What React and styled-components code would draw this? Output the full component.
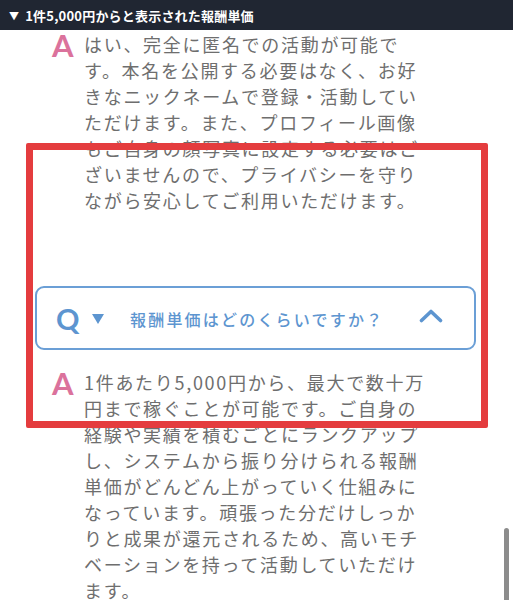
import React from "react";
import styled, { createGlobalStyle } from "styled-components";

const GlobalStyle = createGlobalStyle`
  html, body {
    margin: 0;
    padding: 0;
    background: #ffffff;
  }
  body {
    font-family: "Noto Sans CJK JP", "Noto Sans", sans-serif;
  }
`;

const Page = styled("div")`
  position: relative;
  width: 513px;
  height: 600px;
  overflow: hidden;
  background: #ffffff;
`;

const TopBar = styled("div")`
  height: 30px;
  display: flex;
  align-items: center;
  gap: 6px;
  padding-left: 9px;
  background: #202632;
  color: #ffffff;
  font-size: 13px;
  font-weight: 700;
  letter-spacing: 0.2px;
`;

const Caret = styled("span")`
  font-size: 10px;
`;

const Content = styled("div")`
  padding: 0 37px 0 35px;
`;

const Answer = styled("div")`
  display: flex;
  align-items: flex-start;
  padding-left: 17px;
  margin-top: ${props => props.gap}px;
`;

const Mark = styled("span")`
  flex: 0 0 32px;
  font-family: "Lato", "Noto Sans", sans-serif;
  font-weight: 700;
  font-size: 31px;
  line-height: 26px;
  color: #db729c;
  margin-top: 1px;
`;

const AnswerText = styled("p")`
  margin: 0;
  font-size: 18px;
  line-height: 26px;
  letter-spacing: 1.7px;
  color: #6e6e6e;
  white-space: nowrap;
`;

const QuestionBox = styled("div")`
  height: 60px;
  margin-top: 73px;
  display: flex;
  align-items: center;
  padding: 0 31px 0 19px;
  border: 2px solid #6b9fd6;
  border-radius: 9px;
`;

const QMark = styled("span")`
  font-family: "Lato", "Noto Sans", sans-serif;
  font-weight: 700;
  font-size: 29px;
  color: #5d95d0;
  width: 36px;
  margin-top: 1px;
`;

const QTriangle = styled("svg")`
  width: 12px;
  height: 10px;
  margin-right: 26px;
  margin-top: 1px;
`;

const QuestionText = styled("span")`
  flex: 1;
  font-size: 16px;
  font-weight: 500;
  letter-spacing: 2.2px;
  color: #5d95d0;
  margin-top: 1px;
`;

const Chevron = styled("svg")`
  width: 24px;
  height: 15px;
  margin-top: -6px;
`;

const Highlight = styled("div")`
  position: absolute;
  left: 26px;
  top: 143px;
  width: 462px;
  height: 285px;
  box-sizing: border-box;
  border: 7px solid #e43c3e;
  border-radius: 2px;
  pointer-events: none;
`;

const ScrollThumb = styled("div")`
  position: absolute;
  right: 4px;
  top: 528px;
  width: 5px;
  height: 90px;
  border-radius: 3px;
  background: #8c8c8c;
`;

const firstAnswer = [
  "はい、完全に匿名での活動が可能で",
  "す。本名を公開する必要はなく、お好",
  "きなニックネームで登録・活動してい",
  "ただけます。また、プロフィール画像",
  "もご自身の顔写真に設定する必要はご",
  "ざいませんので、プライバシーを守り",
  "ながら安心してご利用いただけます。",
];

const secondAnswer = [
  "1件あたり5,000円から、最大で数十万",
  "円まで稼ぐことが可能です。ご自身の",
  "経験や実績を積むごとにランクアップ",
  "し、システムから振り分けられる報酬",
  "単価がどんどん上がっていく仕組みに",
  "なっています。頑張った分だけしっか",
  "りと成果が還元されるため、高いモチ",
  "ベーションを持って活動していただけ",
  "ます。",
];

const Lines = ({ lines }) =>
  lines.map((line, i) => (
    <React.Fragment key={i}>
      {line}
      {i < lines.length - 1 && <br />}
    </React.Fragment>
  ));

const App = () => (
  <>
    <GlobalStyle />
    <Page>
      <TopBar>
        <Caret>▼</Caret>
        <span>1件5,000円からと表示された報酬単価</span>
      </TopBar>
      <Content>
        <Answer gap={1}>
          <Mark>A</Mark>
          <AnswerText>
            <Lines lines={firstAnswer} />
          </AnswerText>
        </Answer>
        <QuestionBox>
          <QMark>Q</QMark>
          <QTriangle viewBox="0 0 12 10">
            <polygon points="0,0 12,0 6,10" fill="#5d95d0" />
          </QTriangle>
          <QuestionText>報酬単価はどのくらいですか？</QuestionText>
          <Chevron viewBox="0 0 24 15">
            <path
              d="M2.5 12.5 L12 3.5 L21.5 12.5"
              fill="none"
              stroke="#5d95d0"
              strokeWidth="3.6"
              strokeLinecap="round"
              strokeLinejoin="round"
            />
          </Chevron>
        </QuestionBox>
        <Answer gap={19}>
          <Mark>A</Mark>
          <AnswerText>
            <Lines lines={secondAnswer} />
          </AnswerText>
        </Answer>
      </Content>
      <Highlight />
      <ScrollThumb />
    </Page>
  </>
);

export default App;
